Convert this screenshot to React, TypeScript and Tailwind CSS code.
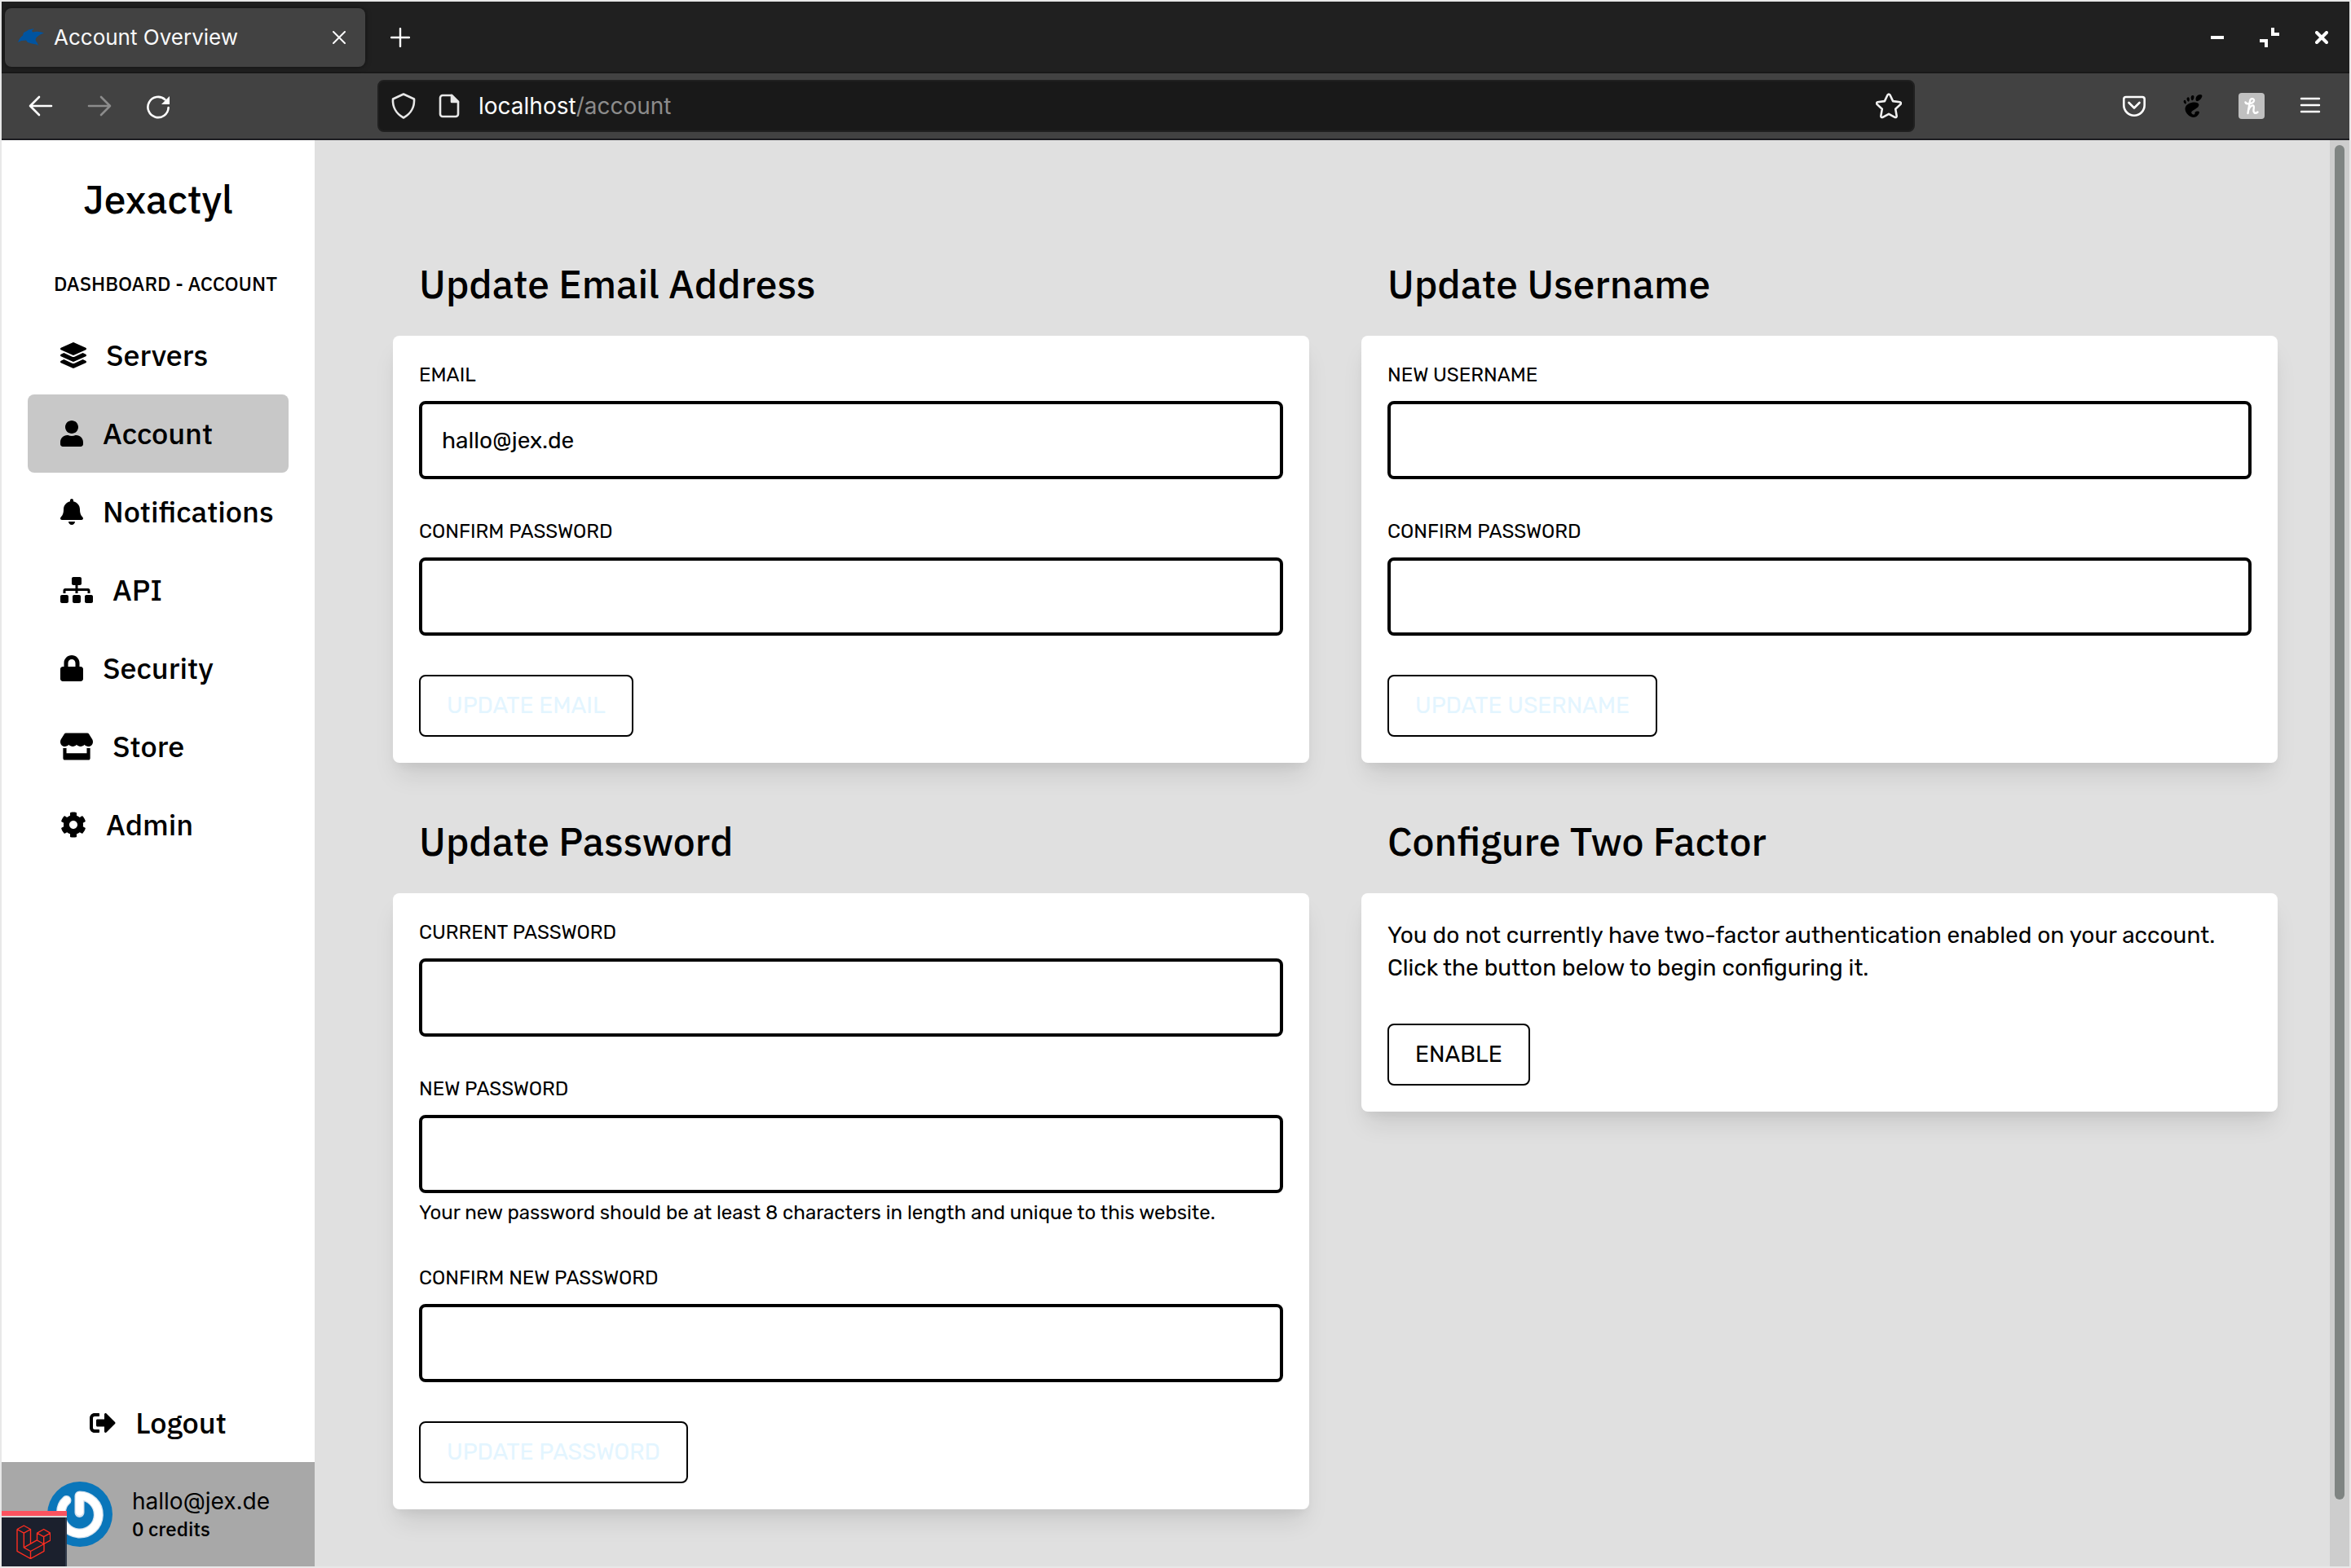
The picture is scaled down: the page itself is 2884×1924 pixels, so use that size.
import { useState, type ReactNode } from "react";
import { FaBell, FaCog, FaLayerGroup, FaLock, FaSignOutAlt, FaSitemap, FaStore, FaUser } from "react-icons/fa";
import { SiGnome } from "react-icons/si";

function TabStrip() {
  return (
    <div className="flex h-[88px] items-center border-b-2 border-[#191919] bg-[#202020] pt-0.5">
      <div className="ml-1 flex h-[72px] w-[442px] items-center rounded-lg bg-[#424242] pr-6 pl-4 shadow-[0_0_6px_rgba(0,0,0,0.5)]">
        <svg className="h-8 w-8 shrink-0" viewBox="0 0 32 32" fill="#0054a0" aria-hidden="true">
          <path d="M0 22Q2 16 6 13.500L7 10 11 8 13 6.500 20 5 17 7.500 18 9.500Q25 7.500 32 10.500 25 12.500 22 17 21 20 23.500 22L25 26 22.500 24.500 17 23.500 12 22 10 19.500 4 20Z" />
        </svg>
        <span className="ml-3 flex-1 font-[Inter,sans-serif] text-[26px] leading-8 text-[#f9f9fa]">Account Overview</span>
        <button type="button" aria-label="Close tab">
          <svg className="h-4 w-4" viewBox="0 0 16 16" stroke="#f9f9fa" strokeWidth="2" strokeLinecap="round" aria-hidden="true">
            <path d="M1 1 15 15M15 1 1 15" />
          </svg>
        </button>
      </div>
      <button type="button" aria-label="New tab" className="ml-[31px]">
        <svg className="h-6 w-6" viewBox="0 0 24 24" stroke="#fff" strokeWidth="2.4" strokeLinecap="round" aria-hidden="true">
          <path d="M12 1v22M1 12h22" />
        </svg>
      </button>
      <div className="mr-[26px] ml-auto flex items-center gap-11">
        <button type="button" aria-label="Minimise">
          <svg className="h-6 w-4" viewBox="0 0 16 24" aria-hidden="true">
            <path d="M0 10h16v4H0z" fill="#fff" />
          </svg>
        </button>
        <button type="button" aria-label="Restore">
          <svg className="h-6 w-6" viewBox="0 0 24 24" fill="#fff" aria-hidden="true">
            <path d="M14 0h4v6h6v4H14zM0 14h10v10H6v-6H0z" />
          </svg>
        </button>
        <button type="button" aria-label="Close window">
          <svg className="h-4 w-4" viewBox="0 0 16 16" stroke="#fff" strokeWidth="4" strokeLinecap="round" aria-hidden="true">
            <path d="M2 2 14 14M14 2 2 14" />
          </svg>
        </button>
      </div>
    </div>
  );
}

function Toolbar() {
  return (
    <div className="flex h-[82px] items-center border-b-2 border-[#1c1c20] bg-[#424242]">
      <div className="flex w-[461px] shrink-0 items-center gap-10 pl-8">
        <button type="button" aria-label="Back">
          <svg className="h-8 w-8" viewBox="0 0 32 32" fill="none" stroke="#fff" strokeWidth="2.6" strokeLinecap="round" strokeLinejoin="round" aria-hidden="true">
            <path d="M14 5 3 16l11 11M3 16h26" />
          </svg>
        </button>
        <button type="button" aria-label="Forward">
          <svg className="h-8 w-8" viewBox="0 0 32 32" fill="none" stroke="#8c8c8c" strokeWidth="2.6" strokeLinecap="round" strokeLinejoin="round" aria-hidden="true">
            <path d="m18 5 11 11-11 11M29 16H3" />
          </svg>
        </button>
        <button type="button" aria-label="Reload">
          <svg className="h-8 w-8" viewBox="0 0 32 32" fill="none" stroke="#fff" strokeWidth="2.6" strokeLinecap="round" aria-hidden="true">
            <path d="M24.500 8.200A12.600 12.600 0 1 0 28.600 18" />
            <path d="M30 4v10H20z" fill="#fff" stroke="none" />
          </svg>
        </button>
      </div>
      <form className="flex h-16 min-w-0 flex-1 items-center rounded-lg border-2 border-[#202020] bg-[#191919] px-3.5" onSubmit={(e) => e.preventDefault()}>
        <svg className="h-8 w-8 shrink-0" viewBox="0 0 32 32" fill="none" stroke="#e8e8e8" strokeWidth="2.6" strokeLinejoin="round" aria-hidden="true">
          <path d="M16 1.500 29 7.500c.6 9-3.500 18-13 23C6.500 25.500 2.400 16.500 3 7.500z" />
        </svg>
        <svg className="ml-6 h-8 w-8 shrink-0" viewBox="0 0 32 32" fill="none" stroke="#e8e8e8" strokeWidth="2.6" strokeLinejoin="round" aria-hidden="true">
          <path d="M8 3h11l8 8v15a3 3 0 0 1-3 3H8a3 3 0 0 1-3-3V6a3 3 0 0 1 3-3z" />
          <path d="M19 3v8h8z" fill="#e8e8e8" />
        </svg>
        <div className="ml-5 flex-1 font-[Inter,sans-serif] text-[28px] leading-8 text-[#8c8c8c]">
          <span className="text-white">localhost</span>/account
        </div>
        <button type="button" aria-label="Bookmark this page">
          <svg className="h-8 w-8" viewBox="0 0 32 32" fill="none" stroke="#f0f0f0" strokeWidth="2.6" strokeLinejoin="round" aria-hidden="true">
            <path d="M14.500 2.500q1.500-2 3 0l3.600 7.600 8.600 1.100q2 .8.800 2.700l-6.300 5.900 1.500 8.600q-.2 2.200-2.300 1.500L16 25.800l-7.400 4.100q-2.100.7-2.300-1.500l1.500-8.600L1.500 13.900q-1.200-1.900.8-2.700l8.600-1.100z" />
          </svg>
        </button>
      </form>
      <div className="flex w-[533px] shrink-0 items-center justify-end gap-10 pr-8">
        <button type="button" aria-label="Save to Pocket">
          <svg className="h-8 w-8" viewBox="0 0 32 32" fill="none" stroke="#fff" strokeWidth="2.6" strokeLinecap="round" strokeLinejoin="round" aria-hidden="true">
            <path d="M6 5h20a2.700 2.700 0 0 1 2.700 2.700V15a12.700 12.700 0 0 1-25.400 0V7.700A2.700 2.700 0 0 1 6 5z" />
            <path d="m9.500 12 6.500 6.500 6.500-6.500" />
          </svg>
        </button>
        <button type="button" aria-label="GNOME Shell integration" className="flex h-8 w-8 items-center justify-center">
          <SiGnome className="h-7 w-7 text-black" />
        </button>
        <button type="button" aria-label="Honey" className="flex h-8 w-8 items-center justify-center rounded bg-[#c0c0c0]">
          <svg className="h-8 w-8" viewBox="0 0 32 32" fill="none" stroke="#fff" strokeWidth="2.4" strokeLinecap="round" strokeLinejoin="round" aria-hidden="true">
            <path d="M8.500 11.500c1 3 9.500 2 10.500-2 .4-3-4.500-3.500-5 .5L11.500 25M12.500 20.500c1.500-4 4-5.500 5.500-5s1 2.500.5 5c-.6 3 1.500 6 5 3" />
          </svg>
        </button>
        <button type="button" aria-label="Open menu">
          <svg className="h-8 w-8" viewBox="0 0 32 32" stroke="#fff" strokeWidth="2.4" strokeLinecap="round" aria-hidden="true">
            <path d="M5 7h22M5 15h22M5 23h22" />
          </svg>
        </button>
      </div>
    </div>
  );
}

const navItems: { label: string; icon: ReactNode; active?: boolean }[] = [
  { label: "Servers", icon: <FaLayerGroup className="h-8 w-8" /> },
  { label: "Account", icon: <FaUser className="h-8 w-7" />, active: true },
  { label: "Notifications", icon: <FaBell className="h-8 w-7" /> },
  { label: "API", icon: <FaSitemap className="h-8 w-10" /> },
  { label: "Security", icon: <FaLock className="h-8 w-7" /> },
  { label: "Store", icon: <FaStore className="h-[34px] w-10" /> },
  { label: "Admin", icon: <FaCog className="h-8 w-8" /> },
];

function Sidebar() {
  return (
    <aside className="relative flex w-96 shrink-0 flex-col bg-white font-['IBM_Plex_Sans',Roboto,sans-serif] font-medium">
      <h1 className="mt-10 text-center text-[48px] leading-[64px]">Jexactyl</h1>
      <p className="mt-14 pl-16 text-[24px] leading-8 whitespace-nowrap uppercase">Dashboard - Account</p>
      <nav className="mt-6 flex flex-col px-8">
        {navItems.map(({ label, icon, active }) => (
          <a
            key={label}
            href="#"
            aria-current={active ? "page" : undefined}
            className={`flex h-24 items-center gap-6 rounded-lg pl-10 text-[36px] leading-12 ${active ? "bg-[#c8c8c8]" : ""}`}
          >
            {icon}
            {label}
          </a>
        ))}
      </nav>
      <a href="#" className="mt-auto flex h-24 items-center justify-center gap-6 text-[36px] leading-12">
        <FaSignOutAlt className="h-8 w-8" />
        Logout
      </a>
      <div className="flex h-32 items-center gap-6 bg-[#a8a8a8] pl-14">
        <svg className="h-20 w-20" viewBox="0 0 80 80" fill="none" strokeLinecap="round" role="img" aria-label="Avatar">
          <circle cx="40" cy="40" r="40" fill="#0a76ba" />
          <path d="M39.500 38V17.500A23 23 0 1 1 17 38c0-6 2.500-11.500 6.500-15" stroke="#d5e2ee" strokeWidth="12" strokeLinejoin="round" />
          <path d="M39.500 37V17.500A23 23 0 1 1 17 38c0-6 2.500-11.500 6.500-15" stroke="#fff" strokeWidth="9.500" strokeLinejoin="round" />
        </svg>
        <div>
          <p className="font-[Inter,sans-serif] text-[28px] leading-9 font-normal">hallo@jex.de</p>
          <p className="text-[24px] leading-8">0 credits</p>
        </div>
      </div>
      <button type="button" aria-label="Open debug bar" className="absolute bottom-0 left-0 flex w-20 flex-col bg-[#d8d8d8]">
        <span className="h-1.5 w-full bg-[#fb535f]" />
        <span className="mt-0.5 flex h-[60px] w-20 items-center justify-center border-r-2 border-[#313a4a] bg-[#1b202d]">
          <svg className="h-[42px] w-[42px]" viewBox="0 0 42 42" fill="none" stroke="#ff2d20" strokeWidth="1.4" strokeLinejoin="round" aria-hidden="true">
            <path d="M1 5.500 9.300 1l8.200 4.500v17.800M1 5.500l8.300 4.600 8.200-4.600M1 5.500v26.800l16.500 9.200 16.500-9.200V23.500M9.300 10.100v17.800l8.200 4.600v9M9.300 27.900l15.900-9M17.500 32.500l16.500-9M25.500 10.200l8.200-4.700 8 4.700v8.800l-8 4.500-8.200-4.500zM25.500 10.200l8.200 4.500 8-4.500M33.700 14.700v8.800" />
          </svg>
        </span>
      </button>
    </aside>
  );
}

function Section({ title, children }: { title: string; children: ReactNode }) {
  return (
    <section>
      <h2 className="mb-8 pl-8 font-['IBM_Plex_Sans',Roboto,sans-serif] text-[48px] leading-[64px] font-medium">{title}</h2>
      <div className="flex flex-col items-start gap-12 rounded-lg bg-white p-8 shadow-[0_20px_30px_-6px_rgba(0,0,0,0.1),0_8px_12px_-4px_rgba(0,0,0,0.05)]">
        {children}
      </div>
    </section>
  );
}

function Field({ id, label, type = "password", initial = "", hint }: { id: string; label: string; type?: string; initial?: string; hint?: string }) {
  const [value, setValue] = useState(initial);
  return (
    <div className="w-full">
      <label htmlFor={id} className="mb-4 block text-[24px] leading-8 uppercase">
        {label}
      </label>
      <input
        id={id}
        type={type}
        value={value}
        onChange={(e) => setValue(e.target.value)}
        className="block h-24 w-full rounded-lg border-4 border-black bg-white px-6 text-[28px]"
      />
      {hint && <p className="mt-2 text-[24px] leading-8">{hint}</p>}
    </div>
  );
}

function ActionButton({ children, disabled }: { children: ReactNode; disabled?: boolean }) {
  return (
    <button type="button" disabled={disabled} className="h-[76px] rounded-lg border-2 border-black px-8 text-[28px] leading-9 uppercase disabled:text-[#e3f5ff]">
      {children}
    </button>
  );
}

export default function App() {
  return (
    <div className="flex min-h-screen flex-col border-2 border-[#e8e8e8] text-black">
      <TabStrip />
      <Toolbar />
      <div className="flex flex-1">
        <Sidebar />
        <main className="grid flex-1 grid-cols-2 content-start gap-16 bg-[#e0e0e0] pt-36 pr-16 pb-[70px] pl-24 font-[Rubik,Roboto,sans-serif]">
          <Section title="Update Email Address">
            <Field id="email" label="Email" type="email" initial="hallo@jex.de" />
            <Field id="email-password" label="Confirm Password" />
            <ActionButton disabled>Update Email</ActionButton>
          </Section>
          <Section title="Update Username">
            <Field id="username" label="New Username" type="text" />
            <Field id="username-password" label="Confirm Password" />
            <ActionButton disabled>Update Username</ActionButton>
          </Section>
          <Section title="Update Password">
            <Field id="current-password" label="Current Password" />
            <Field
              id="new-password"
              label="New Password"
              hint="Your new password should be at least 8 characters in length and unique to this website."
            />
            <Field id="confirm-new-password" label="Confirm New Password" />
            <ActionButton disabled>Update Password</ActionButton>
          </Section>
          <Section title="Configure Two Factor">
            <p className="text-[28px] leading-10">
              You do not currently have two-factor authentication enabled on your account. Click the button below to begin configuring it.
            </p>
            <ActionButton>Enable</ActionButton>
          </Section>
        </main>
        <div className="flex w-6 shrink-0 flex-col bg-[#cdcdcd] px-1.5 pt-1.5 pb-[82px]" aria-hidden="true">
          <div className="flex-1 rounded-full bg-[#7f8482]" />
        </div>
      </div>
    </div>
  );
}
